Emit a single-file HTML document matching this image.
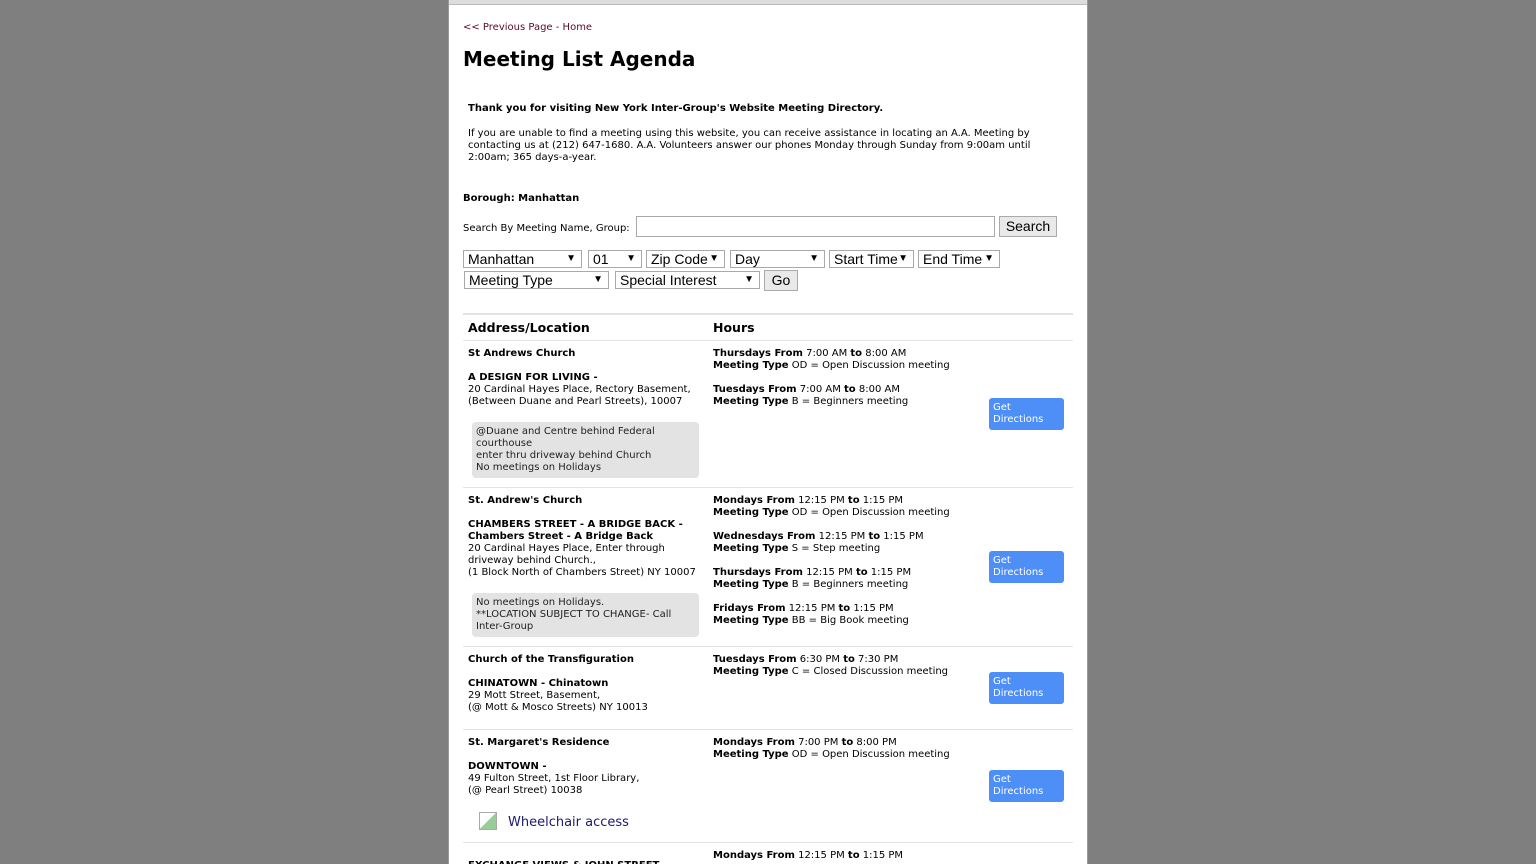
<!DOCTYPE html>
<html><head><meta charset="utf-8"><style>
html,body{margin:0;padding:0;}
body{width:1536px;height:864px;background:#7f7f7f;overflow:hidden;font-family:"DejaVu Sans","Liberation Sans",sans-serif;font-size:10px;color:#000;position:relative;}
#w{position:absolute;left:448px;top:0;width:640px;height:864px;background:#fff;border-left:1px solid #999;border-right:1px solid #999;box-sizing:border-box;overflow:hidden}
#w:before{content:"";position:absolute;left:0;right:0;top:0;height:4px;background:#ddd;border-bottom:1px solid #bbb;}
.a{position:absolute;white-space:nowrap;line-height:12px;margin-top:2px;margin-left:-1px}
.b{font-weight:bold}
.n{color:#1a1a6e}
.sel{position:absolute;height:18px;border:1px solid #a9a9a9;box-sizing:border-box;font-family:"Liberation Sans",sans-serif;font-size:14px;line-height:16px;padding-left:4px;background:#fff;margin-left:-1px}
.sel:after{content:"▼";position:absolute;right:5px;top:0;font-size:10px}
.btn{position:absolute;border:1px solid #aaa;background:#e9e9e9;box-sizing:border-box;font-family:"Liberation Sans",sans-serif;font-size:14px;text-align:center;line-height:18px}
.hr{position:absolute;left:14px;width:610px;height:2px;background:#e3e3e3}
.gd{position:absolute;left:540px;width:75px;height:32px;background:#4d8ff7;border-radius:3px;color:#fff;font-size:10px;line-height:12px;padding:4px 0 0 4px;box-sizing:border-box}
.note{position:absolute;left:23px;width:227px;background:#e3e3e3;border-radius:4px;padding:4px 4px;box-sizing:border-box;line-height:12px;color:#222}
</style></head><body><div id="w">
<div class="a" style="left:15px;top:20px;color:#5a0a2a">&lt;&lt; Previous Page - Home</div>
<div class="a b" style="left:15px;top:44px;font-size:20px;line-height:26px">Meeting List Agenda</div>
<div class="a b" style="left:20px;top:101px">Thank you for visiting New York Inter-Group's Website Meeting Directory.</div>
<div class="a" style="left:20px;top:126px">If you are unable to find a meeting using this website, you can receive assistance in locating an A.A. Meeting by<br>contacting us at (212) 647-1680. A.A. Volunteers answer our phones Monday through Sunday from 9:00am until<br>2:00am; 365 days-a-year.</div>
<div class="a b" style="left:15px;top:191px">Borough: Manhattan</div>
<div class="a" style="left:15px;top:221px">Search By Meeting Name, Group:</div>
<div style="position:absolute;left:187px;top:216px;width:359px;height:21px;border:1px solid #a9a9a9;box-sizing:border-box"></div>
<div class="btn" style="left:550px;top:216px;width:58px;height:21px">Search</div>
<div class="sel" style="left:15px;top:250px;width:119px">Manhattan</div>
<div class="sel" style="left:140px;top:250px;width:54px">01</div>
<div class="sel" style="left:198px;top:250px;width:79px">Zip Code</div>
<div class="sel" style="left:282px;top:250px;width:95px">Day</div>
<div class="sel" style="left:381px;top:250px;width:85px">Start Time</div>
<div class="sel" style="left:470px;top:250px;width:82px">End Time</div>
<div class="sel" style="left:16px;top:271px;width:145px">Meeting Type</div>
<div class="sel" style="left:167px;top:271px;width:145px">Special Interest</div>
<div class="btn" style="left:315px;top:270px;width:34px;height:21px">Go</div>
<div class="hr" style="top:313px"></div>
<div class="a b" style="left:20px;top:319px;font-size:12.5px;line-height:14px">Address/Location</div>
<div class="a b" style="left:265px;top:319px;font-size:12.5px;line-height:14px">Hours</div>
<div class="hr" style="top:340px;height:1px"></div>

<div class="a" style="left:20px;top:346px"><b>St Andrews Church</b><br><br><b>A DESIGN FOR LIVING -</b><br>20 Cardinal Hayes Place, Rectory Basement,<br>(Between Duane and Pearl Streets), 10007</div>
<div class="note" style="top:422px;height:56px">@Duane and Centre behind Federal<br>courthouse<br>enter thru driveway behind Church<br>No meetings on Holidays</div>
<div class="a" style="left:265px;top:346px"><b>Thursdays From</b> 7:00 AM <b>to</b> 8:00 AM<br><b>Meeting Type</b> OD = Open Discussion meeting<br><br><b>Tuesdays From</b> 7:00 AM <b>to</b> 8:00 AM<br><b>Meeting Type</b> B = Beginners meeting</div>
<div class="gd" style="top:398px">Get<br>Directions</div>
<div class="hr" style="top:487px;height:1px"></div>

<div class="a" style="left:20px;top:493px"><b>St. Andrew's Church</b><br><br><b>CHAMBERS STREET - A BRIDGE BACK -</b><br><b>Chambers Street - A Bridge Back</b><br>20 Cardinal Hayes Place, Enter through<br>driveway behind Church.,<br>(1 Block North of Chambers Street) NY 10007</div>
<div class="note" style="top:593px;height:44px">No meetings on Holidays.<br>**LOCATION SUBJECT TO CHANGE- Call<br>Inter-Group</div>
<div class="a" style="left:265px;top:493px"><b>Mondays From</b> 12:15 PM <b>to</b> 1:15 PM<br><b>Meeting Type</b> OD = Open Discussion meeting<br><br><b>Wednesdays From</b> 12:15 PM <b>to</b> 1:15 PM<br><b>Meeting Type</b> S = Step meeting<br><br><b>Thursdays From</b> 12:15 PM <b>to</b> 1:15 PM<br><b>Meeting Type</b> B = Beginners meeting<br><br><b>Fridays From</b> 12:15 PM <b>to</b> 1:15 PM<br><b>Meeting Type</b> BB = Big Book meeting</div>
<div class="gd" style="top:551px">Get<br>Directions</div>
<div class="hr" style="top:646px;height:1px"></div>

<div class="a" style="left:20px;top:652px"><b>Church of the Transfiguration</b><br><br><b>CHINATOWN - Chinatown</b><br>29 Mott Street, Basement,<br>(@ Mott &amp; Mosco Streets) NY 10013</div>
<div class="a" style="left:265px;top:652px"><b>Tuesdays From</b> 6:30 PM <b>to</b> 7:30 PM<br><b>Meeting Type</b> C = Closed Discussion meeting</div>
<div class="gd" style="top:672px">Get<br>Directions</div>
<div class="hr" style="top:729px;height:1px"></div>

<div class="a" style="left:20px;top:735px"><b>St. Margaret's Residence</b><br><br><b>DOWNTOWN -</b><br>49 Fulton Street, 1st Floor Library,<br>(@ Pearl Street) 10038</div>
<div style="position:absolute;left:30px;top:812px;width:18px;height:18px;border:1px solid #aaa;box-sizing:border-box;background:linear-gradient(135deg,#fff 50%,#9c9 50%)"></div>
<div class="a n" style="left:60px;top:813px;font-size:13px;line-height:15px">Wheelchair access</div>
<div class="a" style="left:265px;top:735px"><b>Mondays From</b> 7:00 PM <b>to</b> 8:00 PM<br><b>Meeting Type</b> OD = Open Discussion meeting</div>
<div class="gd" style="top:770px">Get<br>Directions</div>
<div class="hr" style="top:842px;height:1px"></div>
<div class="a" style="left:265px;top:848px"><b>Mondays From</b> 12:15 PM <b>to</b> 1:15 PM</div>
<div class="a b" style="left:20px;top:858px">EXCHANGE VIEWS &amp; JOHN STREET</div>
</div></body></html>
